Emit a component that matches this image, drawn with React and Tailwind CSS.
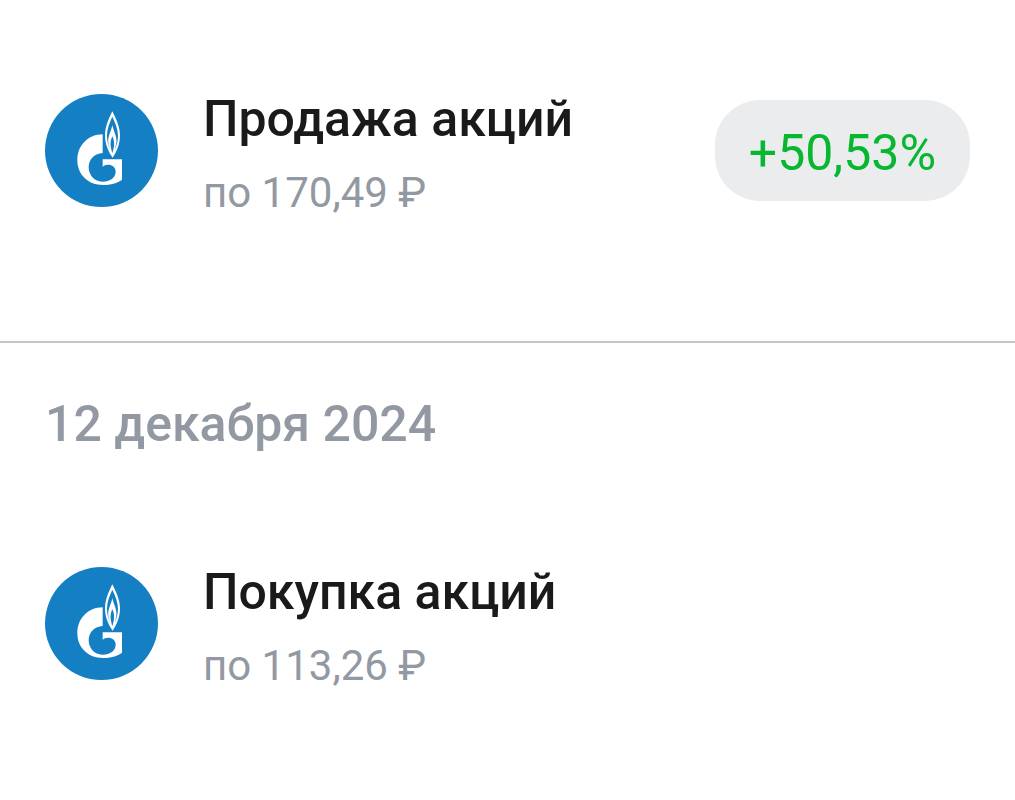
import React from "react";

const operations = [
    {
        id: 1,
        title: "Продажа акций",
        price: "по 170,49 ₽",
        profit: "+50,53%",
    },
    {
        id: 2,
        title: "Покупка акций",
        price: "по 113,26 ₽",
    },
];

function CompanyLogo() {
    return (
        <svg viewBox="0 0 339 339" className="size-[113px] shrink-0" aria-hidden="true">
            <circle cx="169.5" cy="169.5" r="169.5" fill="#157fc4" />
            {/* letter ring with the hook */}
            <path
                fill="#fff"
                d="M173 121 V177 C149 178 131 196 131 220 C131 244 149 263 172 263 C196 263 212 250 212 233 C212 219 201 212 189 212 C182 212 177 214 173 218 V196 H231 V257 C217 267 197 273 174 273 C130 273 97 243 97 199 C97 154 130 121 173 121 Z"
            />
            {/* flame */}
            <path
                fill="#fff"
                d="M202 52 C214 77 225 99 225 124 C225 150 215 174 203 191 C190 174 180 150 180 124 C180 99 190 77 202 52 Z"
            />
            <path
                fill="#157fc4"
                d="M202 68 C211 88 219 105 219 125 C219 141 215 154 209 167 C212 155 216 146 214 134 C212 121 205 108 202 94 C199 108 192 121 190 134 C188 146 192 155 196 167 C190 154 186 141 186 125 C186 105 193 88 202 68 Z"
            />
            <path
                fill="#157fc4"
                d="M202 127 C207 137 208 146 207 156 C206 164 204 171 202 178 C200 171 198 164 197 156 C196 146 197 137 202 127 Z"
            />
        </svg>
    );
}

function Operation({ operation }) {
    return (
        <div className="flex items-start px-[45px]">
            <CompanyLogo />
            <div className="ml-[45px] flex flex-1 flex-col gap-6">
                <h3 className="text-[50px] leading-[50px] font-medium text-[#1a1a1a]">{operation.title}</h3>
                <p className="text-[42px] leading-[50px] text-[#9299a2]">{operation.price}</p>
            </div>
            {operation.profit && (
                <span className="mt-[6px] rounded-[45px] bg-[#ebecee] px-[34px] pt-7 pb-[23px] text-[50px] leading-[50px] text-[#07b72f]">
                    {operation.profit}
                </span>
            )}
        </div>
    );
}

function App() {
    return (
        <main className="min-h-screen bg-white font-['Roboto',sans-serif]">
            <section className="border-b-2 border-[#c6c6c8] pt-[94px] pb-[123px]">
                <Operation operation={operations[0]} />
            </section>
            <section className="pt-14 pb-20">
                <h2 className="mb-[118px] px-[45px] text-[50px] leading-[50px] font-medium text-[#9299a2]">
                    12 декабря 2024
                </h2>
                <Operation operation={operations[1]} />
            </section>
        </main>
    );
}

export default App;
